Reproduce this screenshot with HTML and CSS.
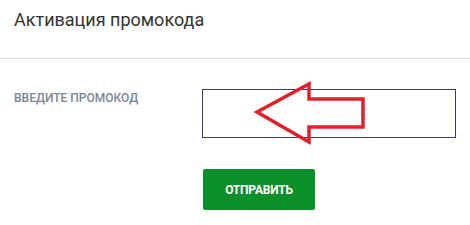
FILE: index.html
```html
<!DOCTYPE html>
<html lang="ru">
<head>
  <meta charset="UTF-8">
  <title>Активация промокода</title>
  <link rel="stylesheet" href="styles.css">
</head>
<body>

  <div class="header">
    <h1>Активация промокода</h1>
  </div>

  <div class="form">
    <div class="row">
      <label for="promo">Введите промокод</label>
      <div class="field">
        <input id="promo" type="text">
        <svg class="arrow" width="170" height="70" viewBox="0 0 170 70">
          <polygon points="55,33 107,5 107,20 161,20 161,48 107,48 107,63"
                   fill="none" stroke="#e3202a" stroke-width="3.5" stroke-linejoin="miter"/>
        </svg>
      </div>
    </div>
    <button class="send">Отправить</button>
  </div>

</body>
</html>
```

FILE: styles.css
```css
body {
  margin: 0;
  font-family: Roboto, "Noto Sans", sans-serif;
  background: #fff;
  color: #333;
}

.header {
  height: 58px;
  padding: 0 14px;
  border-bottom: 1px solid #dcdcdc;
}

.header h1 {
  margin: 0;
  padding-top: 9px;
  font-size: 18px;
  font-weight: 400;
  line-height: 22px;
  color: #333;
}

.form {
  padding: 30px 14px 0;
}

.row {
  display: flex;
  align-items: flex-start;
}

.row label {
  width: 189px;
  margin-top: 2px;
  font-size: 12px;
  line-height: 14px;
  font-weight: 500;
  text-transform: uppercase;
  color: #7b8593;
}

.field {
  position: relative;
}

.field input {
  display: block;
  box-sizing: border-box;
  width: 254px;
  height: 49px;
  border: 1px solid #3c3a6e;
  outline: none;
  padding: 0 10px;
}

.arrow {
  position: absolute;
  left: 0;
  top: -10px;
  pointer-events: none;
}

.send {
  display: block;
  margin: 31px 0 0 189px;
  width: 112px;
  height: 41px;
  border: none;
  border-radius: 2px;
  background: #0b8f2b;
  color: #fff;
  font-family: Roboto, "Noto Sans", sans-serif;
  font-size: 12px;
  font-weight: 700;
  text-transform: uppercase;
  letter-spacing: -0.2px;
  cursor: pointer;
}
```
